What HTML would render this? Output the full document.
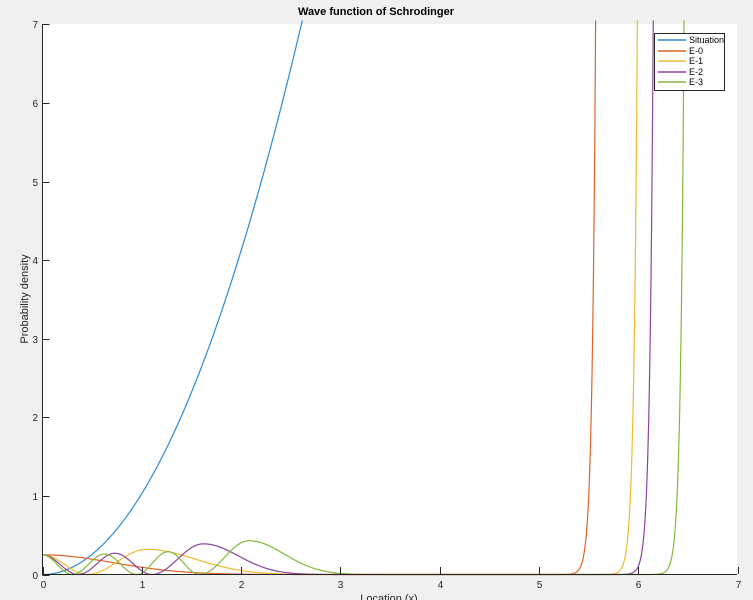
<!DOCTYPE html>
<html><head><meta charset="utf-8"><style>
html,body{margin:0;padding:0;background:#f0f0f0;width:753px;height:600px;overflow:hidden}
svg{display:block;font-family:"Liberation Sans",sans-serif}
</style></head><body>
<svg id="s" width="753" height="600" viewBox="0 0 753 600">
<rect x="42" y="24" width="695" height="550" fill="#fff"/>
<g id="curves" fill="none" stroke-width="1.2"></g>
<g stroke="#262626" stroke-width="1" fill="none">
<path d="M42.5 24 V574.5 H737"/>
</g>
<g id="ticks" stroke="#262626" stroke-width="1"></g>
<g id="lbl" font-size="10" fill="#262626"></g>
<text x="376" y="15" font-size="11" font-weight="bold" text-anchor="middle" fill="#000">Wave function of Schrodinger</text>
<text x="0" y="0" font-size="11" fill="#262626" text-anchor="middle" transform="translate(28 299) rotate(-90)">Probability density</text>
<text x="389" y="602" font-size="11" fill="#262626" text-anchor="middle">Location (x)</text>
<rect x="654.5" y="33.5" width="70" height="57" fill="#fff" stroke="#262626"/>
<g stroke-width="1.5">
<line x1="658" y1="40" x2="686" y2="40" stroke="#2a8ad6"/>
<line x1="658" y1="51" x2="686" y2="51" stroke="#dd6428"/>
<line x1="658" y1="61" x2="686" y2="61" stroke="#f2ba30"/>
<line x1="658" y1="72" x2="686" y2="72" stroke="#8e43a0"/>
<line x1="658" y1="82" x2="686" y2="82" stroke="#84b83a"/>
</g>
<g font-size="9" fill="#000">
<text x="689" y="43">Situation</text>
<text x="689" y="54">E-0</text>
<text x="689" y="64">E-1</text>
<text x="689" y="75">E-2</text>
<text x="689" y="85">E-3</text>
</g>
</svg>
<script>
var X0=42.5,SX=99.3,Y0=574.5,SY=78.6;
function px(x){return X0+x*SX} function py(y){return Y0-y*SY}
var ns="http://www.w3.org/2000/svg";
function lobe(x,a,b,A){return (x>=a&&x<=b)?A*Math.pow(Math.sin(Math.PI*(x-a)/(b-a)),2):0}
function first(x,z){return x<=z?0.25*Math.pow(Math.cos(Math.PI*x/(2*z)),2):0}
function tail(x,a,c,A,w){ if(x<a)return 0; if(x<c)return A*Math.pow(Math.sin(Math.PI/2*(x-a)/(c-a)),2); return A*Math.exp(-Math.pow((x-c)/w,2));}
function blow(x,x7){return 7*Math.exp((x-x7)*28)}
var fs=[
 ["#2a8ad6",function(x){return 1.03*x*x}],
 ["#dd6428",function(x){return 0.25*Math.exp(-x*x)+blow(x,5.57)}],
 ["#f2ba30",function(x){return first(x,0.45)+tail(x,0.45,1.05,0.32,0.7)+blow(x,5.99)}],
 ["#8e43a0",function(x){return first(x,0.36)+lobe(x,0.36,1.1,0.27)+tail(x,1.1,1.62,0.39,0.5)+blow(x,6.15)}],
 ["#84b83a",function(x){return first(x,0.3)+lobe(x,0.3,0.95,0.26)+lobe(x,0.95,1.58,0.29)+tail(x,1.58,2.08,0.43,0.5)+blow(x,6.46)}]
];
var g=document.getElementById("curves");
fs.forEach(function(f){var d="";for(var i=0;i<=7000;i++){var x=i/1000,y=f[1](x);if(y>7.05){if(d)d+="L"+px(x).toFixed(2)+" "+py(7.05).toFixed(2);break;}d+=(d?"L":"M")+px(x).toFixed(2)+" "+py(y).toFixed(2);}
var p=document.createElementNS(ns,"path");p.setAttribute("d",d);p.setAttribute("stroke",f[0]);g.appendChild(p);});
var t=document.getElementById("ticks"),l=document.getElementById("lbl"),td="";
for(var i=0;i<=7;i++){var xp=Math.round(px(i))+0.5,yp=Math.round(py(i))+0.5;
td+="M"+xp+" 574V567M42.5 "+yp+"H49.5";
var a=document.createElementNS(ns,"text");a.setAttribute("x",xp);a.setAttribute("y",588);a.setAttribute("text-anchor","middle");a.textContent=i;l.appendChild(a);
var b=document.createElementNS(ns,"text");b.setAttribute("x",38);b.setAttribute("y",yp+3.5);b.setAttribute("text-anchor","end");b.textContent=i;l.appendChild(b);}
var tp=document.createElementNS(ns,"path");tp.setAttribute("d",td);tp.setAttribute("fill","none");t.appendChild(tp);
</script>
</body></html>
